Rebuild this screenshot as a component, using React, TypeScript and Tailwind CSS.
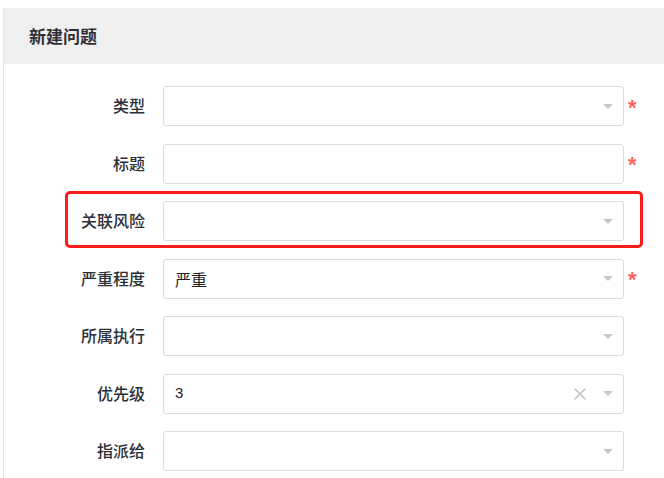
import React from "react";

const font = { fontFamily: '"Noto Sans CJK SC", "Noto Sans", sans-serif' };

function Caret() {
  return (
    <svg width="10" height="5" viewBox="0 0 10 5" className="block">
      <polygon points="0,0 10,0 5,5" fill="#c3c7cf" />
    </svg>
  );
}

function Clear() {
  return (
    <svg width="12" height="12" viewBox="0 0 12 12" className="block">
      <path d="M1 1 L11 11 M11 1 L1 11" stroke="#c4c4c4" strokeWidth="1.6" strokeLinecap="round" />
    </svg>
  );
}

type Row = {
  label: string;
  value?: string;
  required?: boolean;
  select?: boolean;
  clear?: boolean;
  highlight?: boolean;
};

const rows: Row[] = [
  { label: "类型", select: true, required: true },
  { label: "标题", required: true },
  { label: "关联风险", select: true, highlight: true },
  { label: "严重程度", value: "严重", select: true, required: true },
  { label: "所属执行", select: true },
  { label: "优先级", value: "3", select: true, clear: true },
  { label: "指派给", select: true },
];

export default function App() {
  return (
    <div className="w-[664px] h-[478px] bg-white overflow-hidden pt-[8px] pl-[3px]" style={font}>
      <div className="border-l border-[#e6e6e6] h-full">
        <div className="h-[56px] bg-[#f0f0f0] flex items-center pl-[25px]">
          <span className="text-[17px] font-bold text-[#2e2e38]">新建问题</span>
        </div>
        <div className="pt-[22px] flex flex-col gap-[17.5px]">
          {rows.map((r) => (
            <div key={r.label} className="relative flex items-center h-[40px]">
              {r.highlight && (
                <div className="absolute left-[61px] top-[-10px] w-[578px] h-[57px] border-[3px] border-[#ff1a1a] rounded-[5px] pointer-events-none" />
              )}
              <div className="w-[141px] text-right text-[16px] font-medium text-[#2b2f38] leading-none mb-[2px]">{r.label}</div>
              <div className="ml-[18px] w-[461px] h-[40px] border border-[#dcdcdc] rounded-[3px] flex items-center pl-[11px] pr-[10px]">
                <span
                  className={r.value === "3" ? "flex-1 text-[15px] text-[#222]" : "flex-1 text-[16px] text-[#222]"}
                  style={r.value === "3" ? { fontFamily: '"Liberation Sans", sans-serif' } : undefined}
                >
                  {r.value ?? ""}
                </span>
                {r.clear && (
                  <span className="mr-[17px]">
                    <Clear />
                  </span>
                )}
                {r.select && <Caret />}
              </div>
              {r.required && (
                <span
                  className="ml-[4px] text-[22px] font-bold text-[#ff6464] leading-none mt-[3px]"
                  style={{ fontFamily: '"Liberation Sans", sans-serif' }}
                >
                  *
                </span>
              )}
            </div>
          ))}
        </div>
      </div>
    </div>
  );
}
